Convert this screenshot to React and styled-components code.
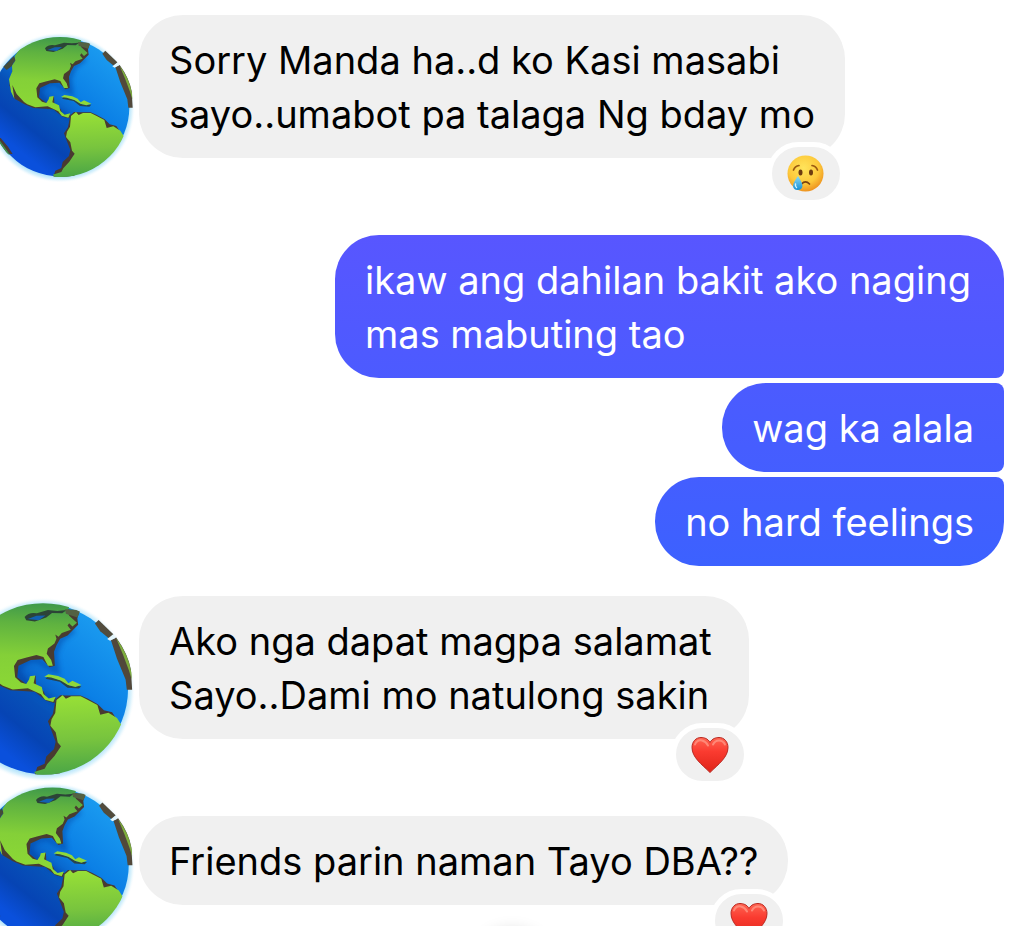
import React from "react"
import styled, { createGlobalStyle, css } from "styled-components"

const GlobalStyle = createGlobalStyle`
  * {
    box-sizing: border-box;
  }

  body {
    margin: 0;
    background: #fff;
  }

  button {
    padding: 0;
    border: 0;
    font: inherit;
    cursor: pointer;
  }
`

const Globe = ({ id }) => (
  <GlobeSvg viewBox="-45 36 450 450" aria-hidden="true">
    <defs>
      <linearGradient id={`${id}-sea`} x1="0.85" y1="0.1" x2="0.25" y2="0.85">
        <stop offset="0" stopColor="#1b9cf0" />
        <stop offset="0.4" stopColor="#0b80e6" />
        <stop offset="0.65" stopColor="#0751b8" />
        <stop offset="0.82" stopColor="#0644b4" />
        <stop offset="1" stopColor="#0a50dc" />
      </linearGradient>
      <linearGradient id={`${id}-north`} x1="0.5" y1="0" x2="0.45" y2="1">
        <stop offset="0" stopColor="#3b964c" />
        <stop offset="0.22" stopColor="#5fb240" />
        <stop offset="0.55" stopColor="#84d038" />
        <stop offset="1" stopColor="#8eda34" />
      </linearGradient>
      <linearGradient id={`${id}-south`} x1="0.5" y1="0" x2="0.55" y2="1">
        <stop offset="0" stopColor="#98e036" />
        <stop offset="0.5" stopColor="#78c43e" />
        <stop offset="1" stopColor="#3f9e48" />
      </linearGradient>
      <radialGradient id={`${id}-glow`}>
        <stop offset="0.92" stopColor="#b9e6fb" />
        <stop offset="0.96" stopColor="#e2f5fd" />
        <stop offset="1" stopColor="#fff" stopOpacity="0" />
      </radialGradient>
      <filter id={`${id}-soft`} x="-20%" y="-20%" width="140%" height="140%">
        <feGaussianBlur stdDeviation="7" />
      </filter>
      <clipPath id={`${id}-clip`}>
        <circle cx="180" cy="261" r="210" />
      </clipPath>
    </defs>
    <circle cx="180" cy="263" r="226" fill={`url(#${id}-glow)`} />
    <circle cx="180" cy="261" r="208" fill={`url(#${id}-sea)`} />
    <g clipPath={`url(#${id}-clip)`}>
      <path
        d="M255 115 L222 140 L207 175 L212 215 L185 202 L170 190 L140 190 L115 215 L135 245 L215 300"
        fill="none"
        stroke="#063a9a"
        strokeWidth="16"
        opacity="0.45"
        filter={`url(#${id}-soft)`}
      />
      <path d="M-30 340 L0 352 L24 380 L38 402 L-10 400 Z" fill="#4b3b36" />
      <path d="M-30 350 L0 362 L20 390 L30 405 L-20 400 Z" fill="#3b9150" />
      <path d="M10 140 L42 108 L46 118 L36 138 L20 150 Z" fill="#424b39" />
      <path
        d="M46 112 Q90 54 186 56 Q232 58 268 76 L264 88 L266 104 L240 130 L222 138 L213 154 L207 170 L209 204 L196 208 L178 188 L150 190 L120 204 L117 232 L140 250 L162 228 L163 250 L182 268 L188 284 L212 284 L208 295 L188 290 L160 268 L100 264 L72 252 L44 236 L28 196 Z"
        fill="#493c30"
      />
      <path
        d="M44 108 Q84 40 176 44 Q216 46 244 60 L240 72 L244 82 L263 99 L252 108 L244 100 L240 106 L248 116 L226 124 L218 133 L210 128 L213 138 L208 150 L192 162 L189 175 L200 190 L204 204 L192 204 L181 183 L164 178 L140 184 L118 190 L109 205 L112 232 L126 245 L139 249 L146 238 L148 230 L161 228 L157 247 L177 256 L181 273 L194 284 L211 280 L205 293 L185 287 L175 274 L143 259 L106 262 L82 253 L72 246 L50 222 L37 195 L43 236 L33 215 L27 178 L37 154 L36 137 L46 122 Z"
        fill={`url(#${id}-north)`}
      />
      <path d="M135 85 Q146 72 165 76 L192 68 L215 70 L238 68 L227 76 L202 75 L188 86 L160 96 L139 93 Z" fill="#2c4437" />
      <path d="M143 90 L164 82 L186 81 L170 93 Z" fill="#1261b2" />
      <path d="M234 66 L272 68 L264 86 L236 77 Z" fill="#536142" />
      <path d="M186 236 L194 229 L229 242 L246 253 L274 254 L268 260 L240 258 L221 243 Z" fill="#29434c" />
      <path d="M183 231 L193 225 L217 229 L233 236 L242 247 L252 241 L274 251 L259 256 L241 251 L223 240 L200 233 Z" fill="#8fd83a" />
      <path
        d="M211 286 L222 276 L235 277 L245 277 L272 277 L289 284 L314 298 L329 313 L349 318 L357 330 L220 470 L160 470 L166 452 L184 444 L188 426 L207 408 L211 390 L198 356 L192 340 L204 322 Z"
        fill="#493a31"
      />
      <path
        d="M213 288 L228 276 L236 285 L249 279 L272 279 L290 288 L313 300 L320 324 L340 319 L361 332 L371 348 L378 354 L400 400 L300 490 L180 486 L158 464 L184 456 L190 445 L208 425 L224 401 L216 392 L211 367 L198 351 L201 335 L210 320 Z"
        fill={`url(#${id}-south)`}
      />
    </g>
    <path d="M307 101 L316 92 L352 127 L343 139 L320 120 Z" fill="#514c3d" />
    <path d="M346 141 L359 135 Q388 175 395 214 L398 263 L385 263 L382 238 L361 187 Z" fill="#51483b" />
    <path d="M359 137 Q388 175 396 220 L397 238 L390 215 L376 178 Z" fill="#7dad3d" />
    <path d="M337 139 L351 128 L357 136 L344 143 Z" fill="#e4f6fd" />
  </GlobeSvg>
)

const CryingFace = () => (
  <svg width="37" height="37" viewBox="0 0 37 37" role="img" aria-label="crying face">
    <defs>
      <radialGradient id="face" cx="0.45" cy="0.35" r="0.65">
        <stop offset="0" stopColor="#ffe45b" />
        <stop offset="0.65" stopColor="#fdc93b" />
        <stop offset="1" stopColor="#ee9420" />
      </radialGradient>
      <linearGradient id="tear" x1="0" y1="0" x2="0" y2="1">
        <stop offset="0" stopColor="#8cdcf7" />
        <stop offset="1" stopColor="#168fd4" />
      </linearGradient>
    </defs>
    <circle cx="18.5" cy="18.5" r="18" fill="url(#face)" />
    <path d="M6.5 15 Q8 11 12 10.500 M25 10.500 Q29 11 30.500 15" fill="none" stroke="#9c5b12" strokeWidth="1.700" strokeLinecap="round" />
    <ellipse cx="13.5" cy="17.5" rx="2" ry="3" fill="#6e3c10" />
    <ellipse cx="24" cy="17.5" rx="2" ry="3" fill="#6e3c10" />
    <path d="M14.5 29 Q18.500 25 22.500 29" fill="none" stroke="#7a4211" strokeWidth="1.700" strokeLinecap="round" />
    <path d="M11 21 Q6 28 6 31 Q6.500 35 10.500 35 Q15 35 15.500 31 Q15 27 11 21 Z" fill="url(#tear)" />
    <path d="M8.5 29 Q8 31.500 9.500 32.500" fill="none" stroke="#d5f4ff" strokeWidth="1.500" strokeLinecap="round" />
  </svg>
)

const Heart = () => (
  <svg width="38" height="38" viewBox="0 0 38 37" role="img" aria-label="red heart">
    <defs>
      <linearGradient id="heart" x1="0.5" y1="0" x2="0.5" y2="1">
        <stop offset="0" stopColor="#ff6552" />
        <stop offset="0.4" stopColor="#fa3b30" />
        <stop offset="1" stopColor="#df2419" />
      </linearGradient>
    </defs>
    <path
      d="M19 6 C21 2 25 1 28 1 C33 1 37 5 37 11 C37 21 27 28 19 36 C11 28 1 21 1 11 C1 5 5 1 10 1 C13 1 17 2 19 6 Z"
      fill="url(#heart)"
      stroke="#b92a22"
      strokeWidth="1"
    />
    <path d="M4 8 Q6 3 11 4 Q15 5 17 9 M22 8 Q24 4 28 4 Q32 4 34 8" fill="none" stroke="#ff9c8c" strokeWidth="2" strokeLinecap="round" opacity="0.7" />
  </svg>
)

const App = () => (
  <Page>
    <GlobalStyle />
    {thread.map(({ id, sent, items }) => (
      <Group key={id} $sent={sent}>
        {items.map(({ lines, reaction: Reaction, globe, minWidth }) => (
          <Row key={lines[0]} $reacted={Boolean(Reaction)}>
            {globe && (
              <AvatarSlot>
                <Avatar $size={globe.size} $top={globe.top} aria-label="View profile">
                  <Globe id={globe.id} />
                </Avatar>
              </AvatarSlot>
            )}
            <Bubble $minWidth={minWidth}>
              {lines.map((line) => (
                <Line key={line}>{line}</Line>
              ))}
              {Reaction && (
                <ReactionPill aria-label="Reactions">
                  <Reaction />
                </ReactionPill>
              )}
            </Bubble>
          </Row>
        ))}
      </Group>
    ))}
    <ScrollButton aria-label="Scroll to latest" />
  </Page>
)

export default App

const Page = styled.main`
  display: flex;
  flex-direction: column;
  gap: 30px;
  height: 100vh;
  padding: 15px 20px 0 0;
  overflow: hidden;
  font-family: Inter, Roboto, "Liberation Sans", sans-serif;
  font-size: 38px;
  line-height: 54px;
`

const Bubble = styled.div`
  position: relative;
  min-width: ${({ $minWidth = 0 }) => $minWidth}px;
  padding: 18px 30px 17px;
  border-radius: 44px;
  background: #f0f0f0;
  color: #000;
`

const Row = styled.div`
  display: flex;
  align-items: flex-start;
  margin-bottom: ${({ $reacted }) => ($reacted ? "47px" : "0")};
`

const Group = styled.section`
  display: flex;
  flex-direction: column;
  flex-shrink: 0;
  gap: 5px;

  ${({ $sent }) =>
    $sent &&
    css`
      align-items: flex-end;

      ${Bubble} {
        background: linear-gradient(#5856ff 235px, #3c61ff 566px) fixed;
        color: #fff;
        border-radius: 44px 8px 8px 44px;
      }

      ${Row}:first-child ${Bubble} {
        border-top-right-radius: 44px;
      }

      ${Row}:last-child ${Bubble} {
        border-bottom-right-radius: 44px;
      }
    `}
`

const Line = styled.div`
  white-space: nowrap;
`

const AvatarSlot = styled.div`
  position: relative;
  flex: 0 0 139px;
`

const Avatar = styled.button`
  position: absolute;
  top: ${({ $top }) => $top}px;
  right: 4px;
  width: ${({ $size }) => $size}px;
  height: ${({ $size }) => $size}px;
  border-radius: 50%;
  background: none;
`

const GlobeSvg = styled.svg`
  display: block;
  width: 100%;
  height: 100%;
`

const ReactionPill = styled.button`
  position: absolute;
  right: 0;
  bottom: -47px;
  display: flex;
  align-items: center;
  justify-content: center;
  width: 78px;
  height: 63px;
  border: 5px solid #fff;
  border-radius: 32px;
  background: #f0f0f0;
`

const ScrollButton = styled.button`
  position: fixed;
  left: 50%;
  bottom: -84px;
  width: 80px;
  height: 80px;
  border-radius: 50%;
  background: #fff;
  box-shadow: 0 0 16px rgba(0, 0, 0, 0.15);
  transform: translateX(-50%);
`

const thread = [
  {
    id: "sorry",
    items: [
      {
        lines: ["Sorry Manda ha..d ko Kasi masabi", "sayo..umabot pa talaga Ng bday mo"],
        reaction: CryingFace,
        globe: { id: "globe-one", size: 150, top: 17 },
      },
    ],
  },
  {
    id: "reply",
    sent: true,
    items: [
      {
        lines: ["ikaw ang dahilan bakit ako naging", "mas mabuting tao"],
        minWidth: 669,
      },
      { lines: ["wag ka alala"] },
      { lines: ["no hard feelings"] },
    ],
  },
  {
    id: "thanks",
    items: [
      {
        lines: ["Ako nga dapat magpa salamat", "Sayo..Dami mo natulong sakin"],
        minWidth: 610,
        reaction: Heart,
        globe: { id: "globe-two", size: 184, top: 1 },
      },
    ],
  },
  {
    id: "friends",
    items: [
      {
        lines: ["Friends parin naman Tayo DBA??"],
        reaction: Heart,
        globe: { id: "globe-three", size: 165, top: -34 },
      },
    ],
  },
]
